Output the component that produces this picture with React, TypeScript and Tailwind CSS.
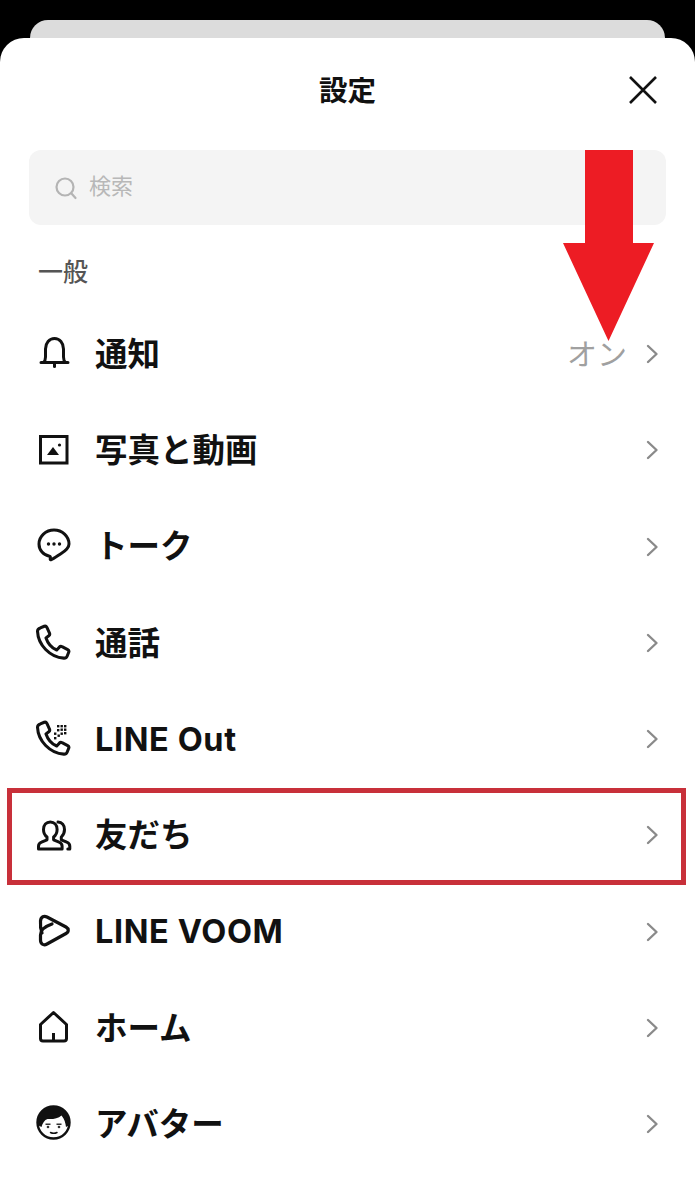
import React from "react";

const stroke = { fill: "none", stroke: "#111", strokeWidth: 3, strokeLinecap: "round" as const, strokeLinejoin: "round" as const };

const Bell = () => (
  <svg width="36" height="36" viewBox="0 0 36 36" {...stroke}>
    <path d="M5 27.500h27M7.500 27.500c1.500-1.500 2-3 2-5.500v-8c0-6 3.800-10.500 9-10.500s9 4.500 9 10.500v8c0 2.500.5 4 2 5.500" />
    <path d="M18.500 29v2.500" />
  </svg>
);
const Photo = () => (
  <svg width="36" height="36" viewBox="0 0 36 36">
    <rect x="4.500" y="5.500" width="26.500" height="26.500" fill="none" stroke="#111" strokeWidth="3" />
    <path d="M11 24l6-8 6 8z" fill="#111" />
    <circle cx="23.500" cy="14" r="1.600" fill="#111" />
  </svg>
);
const Talk = () => (
  <svg width="36" height="36" viewBox="0 0 36 36" {...stroke}>
    <path d="M18 2C9.800 2 3 8.200 3 16c0 6.200 4.500 11.200 10.500 12.300.8.200 1 .8.800 1.700-.2 1.100-.2 2.200 1 1.700 2-.8 5.200-3.100 9.200-5.700C30.500 22.300 33 19.600 33 16 33 8.200 26.200 2 18 2z" />
    <circle cx="12.500" cy="16" r="1.700" fill="#111" stroke="none" />
    <circle cx="18" cy="16" r="1.700" fill="#111" stroke="none" />
    <circle cx="23.500" cy="16" r="1.700" fill="#111" stroke="none" />
  </svg>
);
const phonePath = "M6.500 3.500l3.500-1.500c1-.4 1.800 0 2.300 1l2.300 5c.4 1 .2 1.800-.6 2.400l-2.500 1.900c1.500 4.500 5 8.800 9.500 10.700l2.300-2.500c.7-.7 1.500-.9 2.400-.4l5 2.600c1 .5 1.300 1.300.9 2.300l-1.400 3.500c-.5 1.200-1.500 1.800-3 1.700C15 29.500 4.500 18.500 4 6.500c0-1.300.9-2.500 2.500-3z";
const Phone = () => (
  <svg width="36" height="36" viewBox="0 0 36 36">
    <g transform="translate(-3 0) scale(1.130)"><path d={phonePath} {...stroke} strokeWidth={2.700} /></g>
  </svg>
);
const PhoneOut = () => (
  <svg width="36" height="36" viewBox="0 0 36 36">
    <g transform="translate(-3 0) scale(1.130)"><path d={phonePath} {...stroke} strokeWidth={2.700} /></g>
    {[[28, 5], [24.500, 5], [21, 5], [28, 8.500], [24.500, 8.500], [21, 9], [28, 12], [24.500, 12.500], [18, 12.500], [21.500, 14.500], [18, 17]].map(([x, y], i) => (
      <rect key={i} x={x} y={y} width="2.400" height="2.400" fill="#111" />
    ))}
  </svg>
);
const Friends = () => (
  <svg width="36" height="36" viewBox="0 0 36 36" {...stroke}>
    <path d="M2.500 33v-2.800c0-2 1-3.200 3-4l5.500-2.400v-2.800c-2-1.500-3.500-4-3.500-7.500 0-4.500 2.800-7.500 6.800-7.500s6.800 3 6.800 7.500c0 3.500-1.500 6-3.500 7.500v2.800l5.500 2.400c2 .8 3 2 3 4V33z" />
    <path d="M22 6c4 .2 6.500 3.200 6.500 7.500 0 3.500-1.500 6-3.200 7.500v2.800l5.500 2.400c2 .8 3 2 3 4V33h-2" />
  </svg>
);
const Voom = () => (
  <svg width="36" height="36" viewBox="0 0 36 36" {...stroke} strokeWidth={3.200}>
    <path d="M6 20C4.500 16 4.200 12 4.500 8 5 3.500 8 2.500 11 4l19 10c3 1.700 3 5 0 6.500L11 31c-3.500 2-6.500 0-6.500-4v-5c0-6 5.500-9 11.500-11" />
  </svg>
);
const Home = () => (
  <svg width="36" height="36" viewBox="0 0 36 36" {...stroke}>
    <path d="M4.500 15.500L17.500 3.500 30.500 15.500V29.500c0 1.500-.8 2.500-2.500 2.500H7c-1.700 0-2.500-1-2.500-2.500z" />
    <path d="M17.500 32v-8" strokeLinecap="butt" />
  </svg>
);
const Avatar = () => (
  <svg width="36" height="36" viewBox="0 0 36 36">
    <circle cx="17.500" cy="17.500" r="16" fill="#fff" stroke="#111" strokeWidth="2.400" />
    <path d="M1.500 20C1 8.500 8.500 1.500 17.500 1.500S34 8.500 33.500 20l-3.500 2c-.5-4-1.500-8-4.500-11.500-3.500 3-9 4-14 3.500C8.500 15 6.500 18 5.500 22z" fill="#111" />
    <rect x="9.500" y="18.500" width="5" height="1.500" fill="#333" />
    <rect x="20.500" y="18.500" width="5" height="1.500" fill="#333" />
    <circle cx="12" cy="22" r="1.300" fill="#333" />
    <circle cx="23" cy="22" r="1.300" fill="#333" />
    <path d="M14.500 27.500c2 1 4.500 1 6.500 0" fill="none" stroke="#111" strokeWidth="1.500" strokeLinecap="round" />
  </svg>
);

const Chevron = () => (
  <svg className="mt-[2px]" width="14" height="22" viewBox="0 0 14 22" fill="none" stroke="#8a8a8a" strokeWidth="2.400" strokeLinecap="round" strokeLinejoin="round">
    <path d="M3 3l8.500 8-8.500 8" />
  </svg>
);

const items: { label: string; icon: React.ReactNode; value?: string; boxed?: boolean; track?: string }[] = [
  { label: "通知", icon: <Bell />, value: "オン" },
  { label: "写真と動画", icon: <Photo /> },
  { label: "トーク", icon: <Talk /> },
  { label: "通話", icon: <Phone /> },
  { label: "LINE Out", icon: <PhoneOut />, track: "tracking-[0.6px]" },
  { label: "友だち", icon: <Friends />, boxed: true },
  { label: "LINE VOOM", icon: <Voom />, track: "tracking-[0.6px]" },
  { label: "ホーム", icon: <Home /> },
  { label: "アバター", icon: <Avatar /> },
];

export default function App() {
  return (
    <div className="relative h-[1200px] w-[695px] overflow-hidden bg-black pt-[20px] font-['Inter','Noto_Sans_CJK_JP',sans-serif]">
      <div className="mx-[30px] h-[18px] rounded-t-[18px] bg-[#dcdcdc]" />
      <div className="h-[1162px] rounded-t-[24px] bg-white">
        <header className="relative flex h-[112px] items-center justify-center pb-[6px]">
          <h1 className="text-[28.500px] leading-none font-bold text-[#111]">設定</h1>
          <svg className="absolute top-[37px] right-[37px]" width="30" height="30" viewBox="0 0 30 30" fill="none" stroke="#111" strokeWidth="2.600">
            <path d="M2 2l26 26M28 2L2 28" />
          </svg>
        </header>

        <div className="mx-[29px] flex h-[75px] w-[637px] items-center gap-[11px] rounded-[12px] bg-[#f4f4f4] pl-[25px]">
          <svg width="24" height="24" viewBox="0 0 24 24" fill="none" stroke="#b4b4b4" strokeWidth="2.200" strokeLinecap="round">
            <circle cx="11" cy="11" r="8.500" />
            <path d="M17.500 17.500l4 4.500" />
          </svg>
          <span className="pb-[4px] text-[22px] leading-none text-[#b8b8b8]">検索</span>
        </div>

        <div className="flex h-[80px] items-start pt-[31px] pl-[38px]">
          <span className="text-[25px] leading-[32px] font-medium text-[#555]">一般</span>
        </div>

        <ul className="flex flex-col">
          {items.map((it) => (
            <li key={it.label} className="relative flex h-[96.250px] items-center px-[36px]">
              <span className="flex w-[59px] shrink-0 items-center">{it.icon}</span>
              <span className={`flex-1 pt-[4px] text-[32.500px] leading-none font-bold text-[#111] ${it.track ?? ""}`}>{it.label}</span>
              {it.value && <span className="mr-[18px] pt-[2px] text-[30px] leading-none text-[#a0a0a0]">{it.value}</span>}
              <Chevron />
              {it.boxed && (
                <span className="absolute top-[2px] right-[9px] left-[7px] h-[97px] border-[5px] border-[#c8303a]" />
              )}
            </li>
          ))}
        </ul>
      </div>

      <svg className="absolute top-[150px] left-[563px]" width="91" height="191" viewBox="0 0 91 191" fill="#ed1c24">
        <path d="M22 0h48v93h21L45.500 191 0 93h22z" />
      </svg>
    </div>
  );
}
